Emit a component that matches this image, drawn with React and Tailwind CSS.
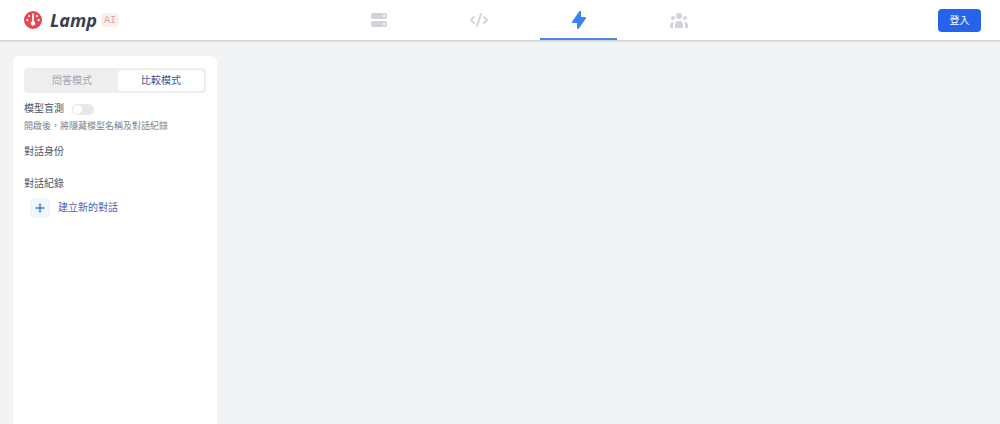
import { HiServer, HiCode, HiLightningBolt, HiUserGroup } from "react-icons/hi";
import { FaGauge } from "react-icons/fa6";

const tabs = [
  { label: "伺服器", Icon: HiServer },
  { label: "程式碼", Icon: HiCode },
  { label: "對話", Icon: HiLightningBolt, active: true },
  { label: "社群", Icon: HiUserGroup },
];

function Header() {
  return (
    <header className="flex h-10 items-center justify-between bg-white pr-[19px] pl-6 shadow-[0_1px_2px_rgba(0,0,0,0.2)]">
      <a href="#home" className="flex items-center">
        <FaGauge className="mr-2 size-[18px] text-[#e5484d]" aria-hidden="true" />
        <span className="font-['Noto_Sans'] text-lg font-bold text-[#374151] italic">Lamp</span>
        <span className="ml-1 rounded-sm bg-[#fdeeee] px-[3px] pt-px font-['Liberation_Mono',monospace] text-[10px] leading-[13px] text-[#d9a3a6]">AI</span>
      </a>
      <nav className="flex h-10 gap-[23px]">
        {tabs.map(({ label, Icon, active }) => (
          <a
            key={label}
            href={"#" + label}
            aria-label={label}
            aria-current={active ? "page" : undefined}
            className={
              active
                ? "flex w-[77px] items-center justify-center border-b-2 border-[#4a86dc] pt-0.5 text-[#3b82f6]"
                : "flex w-[77px] items-center justify-center border-b-2 border-transparent pt-0.5 text-[#d1d5db]"
            }
          >
            <Icon className="size-5" />
          </a>
        ))}
      </nav>
      <button className="h-[23px] w-[43px] rounded bg-[#2563eb] text-[10px] text-white">登入</button>
    </header>
  );
}

function Sidebar() {
  return (
    <aside className="w-[204px] rounded-t-md bg-white px-[11px] pt-3 text-[10px] leading-4 text-[#4b5563]">
      <div className="flex h-[25px] rounded bg-[#eeeeef] p-0.5">
        <button className="flex-1 rounded-sm text-[#a3a6b1]">問答模式</button>
        <button className="w-[86px] rounded-sm bg-white text-[#3f4fa0]">比較模式</button>
      </div>
      <label className="mt-2 flex items-center gap-2">
        模型盲測
        <input
          type="checkbox"
          role="switch"
          className="h-[11px] w-[22px] appearance-none rounded-full bg-[#e5e7eb] p-px before:block before:size-[9px] before:rounded-full before:bg-white checked:bg-[#3b82f6] checked:before:ml-auto"
        />
      </label>
      <p className="mt-px text-[9px] text-[#7b818c]">開啟後，將隱藏模型名稱及對話紀錄</p>
      <h2 className="mt-[10px]">對話身份</h2>
      <h2 className="mt-4">對話紀錄</h2>
      <button className="mt-[6px] ml-[6px] flex items-center gap-2 text-[#4a63b5]">
        <span className="flex size-5 items-center justify-center rounded-sm bg-[#eff6ff] text-[#3b82c4]">
          <svg viewBox="0 0 10 10" className="size-[10px]" fill="none" stroke="currentColor" strokeWidth="1.5" aria-hidden="true">
            <path d="M5 0.5v9M0.5 5h9" />
          </svg>
        </span>
        建立新的對話
      </button>
    </aside>
  );
}

export default function App() {
  return (
    <div className="flex min-h-screen flex-col bg-[#f1f3f5] font-['Liberation_Sans','Noto_Sans_CJK_TC',sans-serif]">
      <Header />
      <main className="flex flex-1 px-[13px] pt-4">
        <Sidebar />
      </main>
    </div>
  );
}
